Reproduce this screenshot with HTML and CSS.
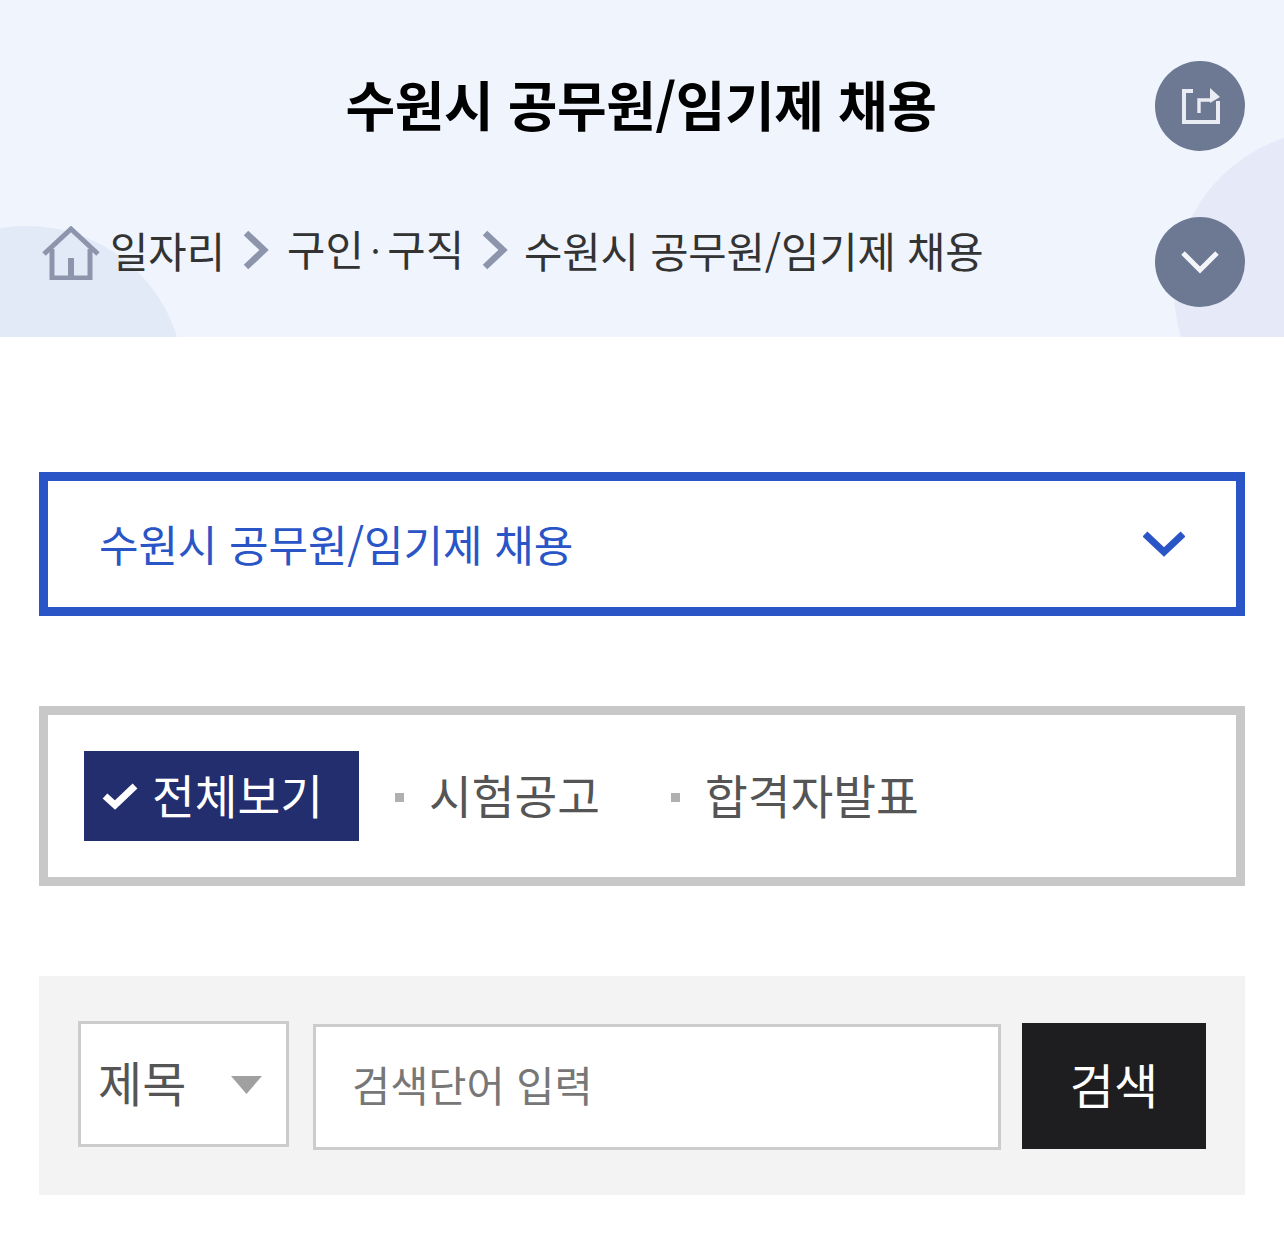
FILE: index.html
```html
<!DOCTYPE html>
<html lang="ko">
<head>
    <meta charset="UTF-8">
    <meta name="viewport" content="width=device-width, initial-scale=1.0">
    <title>수원시 공무원/임기제 채용</title>
    <link rel="stylesheet" href="styles.css">
</head>
<body>
    <header class="page-head">
        <span class="blob blob-left"></span>
        <span class="blob blob-right"></span>
        <h1>수원시 공무원/임기제 채용</h1>
        <button class="round-btn share-btn" aria-label="공유">
            <svg width="42" height="38" viewBox="0 0 42 38" fill="none" stroke="#e9ecf3" stroke-width="3.4">
                <path d="M14 4H5v31h34V14" stroke-width="4"/>
                <path d="M20 26V13h11"/>
                <path d="M31 1l10 9-10 6z" fill="#e9ecf3" stroke="none"/>
            </svg>
        </button>
        <nav class="crumbs">
            <svg class="home" width="60" height="54" viewBox="0 0 60 54" fill="none" stroke="#8d95ad" stroke-width="5">
                <path d="M3 28L30 3l27 25"/>
                <path d="M11 23v29h38V23"/>
                <path d="M30 32v20" stroke-width="6"/>
            </svg>
            <span>일자리</span>
            <svg class="sep" width="26" height="40" viewBox="0 0 26 40" fill="none" stroke="#8d95ad" stroke-width="6.500"><path d="M3 3l18 17L3 37"/></svg>
            <span>구인<b class="dot">·</b>구직</span>
            <svg class="sep sep-last" width="26" height="40" viewBox="0 0 26 40" fill="none" stroke="#8d95ad" stroke-width="6.500"><path d="M3 3l18 17L3 37"/></svg>
            <span class="crumb-current">수원시 공무원/임기제 채용</span>
        </nav>
        <button class="round-btn more-btn" aria-label="더보기">
            <svg width="38" height="24" viewBox="0 0 38 24" fill="none" stroke="#f4f5f8" stroke-width="5"><path d="M2 3l17 17L36 3"/></svg>
        </button>
    </header>

    <main class="content">
        <div class="picker">
            <span>수원시 공무원/임기제 채용</span>
            <svg width="42" height="26" viewBox="0 0 42 26" fill="none" stroke="#2955c7" stroke-width="7"><path d="M2 3l19 18L40 3"/></svg>
        </div>

        <ul class="tabs">
            <li class="tab active">
                <svg width="36" height="28" viewBox="0 0 36 28" fill="none" stroke="#fff" stroke-width="7"><path d="M3 14l10 9L33 4"/></svg>
                전체보기
            </li>
            <li class="tab">시험공고</li>
            <li class="tab">합격자발표</li>
        </ul>

        <form class="search">
            <div class="field-select">
                <span>제목</span>
                <i class="caret"></i>
            </div>
            <input type="text" placeholder="검색단어 입력">
            <button type="button">검색</button>
        </form>
    </main>
</body>
</html>
```

FILE: styles.css
```css
* {
    box-sizing: border-box;
}

body {
    margin: 0;
    height: 1257px;
    overflow: hidden;
    font-family: "Noto Sans CJK KR", "Noto Sans", sans-serif;
    background: #fff;
    color: #333;
}

.page-head {
    position: relative;
    height: 337px;
    overflow: hidden;
    background: #eff4fd;
}

.blob {
    position: absolute;
    border-radius: 50%;
}

.blob-left {
    left: -130px;
    top: 226px;
    width: 314px;
    height: 314px;
    background: #e2eaf7;
}

.blob-right {
    left: 1174px;
    top: 130px;
    width: 320px;
    height: 320px;
    background: #e5e9f8;
}

h1 {
    margin: 0;
    padding-top: 64px;
    padding-right: 2px;
    font-size: 54px;
    line-height: 80px;
    font-weight: 700;
    letter-spacing: -0.5px;
    text-align: center;
    color: #000;
}

.round-btn {
    position: absolute;
    left: 1155px;
    width: 90px;
    height: 90px;
    padding: 0;
    border: none;
    border-radius: 50%;
    background: #6d7893;
    display: flex;
    align-items: center;
    justify-content: center;
}

.share-btn {
    top: 61px;
}

.more-btn {
    top: 217px;
}

.crumbs {
    position: relative;
    display: flex;
    align-items: center;
    margin-top: 73px;
    padding-left: 41px;
    font-size: 41.700px;
    line-height: 62px;
    color: #333;
}

.crumbs .home {
    margin: 5px 9px 0 0;
}

.crumbs .sep {
    margin: 0 18px 0 18px;
}

.crumbs .sep-last {
    margin-right: 16px;
}

.crumb-current {
    letter-spacing: -0.15px;
}

.crumbs .dot {
    font-weight: 400;
    margin: 0 7px;
    position: relative;
    top: -2px;
    font-size: 34px;
}

.content {
    padding: 135px 39px 0;
}

.picker {
    display: flex;
    align-items: center;
    justify-content: space-between;
    height: 144px;
    padding: 0 51px;
    border: 9px solid #2955c7;
    font-size: 43px;
    letter-spacing: -0.15px;
    line-height: 60px;
    color: #2955c7;
}

.picker span {
    margin-top: -2px;
}

.tabs {
    display: flex;
    align-items: center;
    height: 180px;
    margin: 90px 0 0;
    padding: 0 36px;
    list-style: none;
    border: 9px solid #c8c8c8;
}

.tab {
    position: relative;
    display: flex;
    align-items: center;
    gap: 14px;
    height: 90px;
    width: 276px;
    padding: 0 0 6px 70px;
    font-size: 46.500px;
    white-space: nowrap;
    color: #555;
}

.tab::before {
    content: "";
    position: absolute;
    left: 36px;
    top: 42px;
    width: 9px;
    height: 9px;
    background: #b0b0b0;
}

.tab.active {
    width: 275px;
    padding-left: 18px;
    background: #222e6d;
    color: #fff;
}

.tab.active svg {
    margin-top: 5px;
}

.tab.active::before {
    display: none;
}

.search {
    display: flex;
    align-items: center;
    height: 219px;
    margin-top: 90px;
    padding: 0 39px;
    background: #f3f3f3;
}

.field-select {
    display: flex;
    align-items: center;
    justify-content: space-between;
    width: 211px;
    height: 126px;
    margin-top: -3px;
    padding: 0 24px 6px 17px;
    border: 3px solid #ccc;
    background: #fff;
    font-size: 48px;
    color: #555;
}

.caret {
    width: 31px;
    height: 18px;
    margin-top: 8px;
    background: #a0a0a0;
    clip-path: polygon(0 0, 100% 0, 50% 100%);
}

.search input {
    width: 688px;
    height: 126px;
    margin: 3px 21px 0 24px;
    padding: 0 36px 6px;
    border: 3px solid #ccc;
    background: #fff;
    font-family: inherit;
    font-size: 41.500px;
}

.search input::placeholder {
    color: #777;
    opacity: 1;
}

.search button {
    width: 184px;
    height: 126px;
    padding: 0 0 5px;
    border: none;
    background: #1e1e20;
    color: #fff;
    font-family: inherit;
    font-size: 48px;
}
```
